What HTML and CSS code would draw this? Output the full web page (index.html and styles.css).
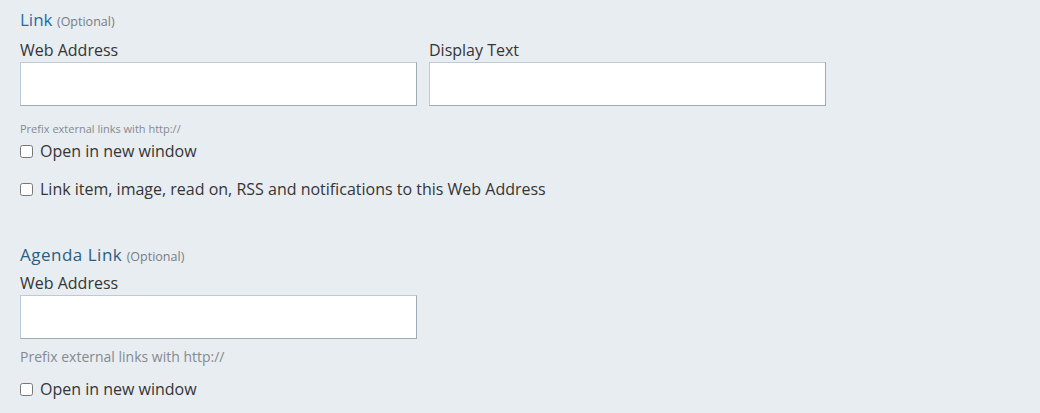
FILE: index.html
```html
<!DOCTYPE html>
<html>
<head>
<meta charset="utf-8">
<link rel="stylesheet" href="styles.css">
</head>
<body>
<div class="page">
  <section class="group">
    <h3 class="title title-link">Link <span class="optional">(Optional)</span></h3>
    <div class="row">
      <div class="field">
        <label class="label">Web Address</label>
        <input class="input" type="text">
      </div>
      <div class="field">
        <label class="label">Display Text</label>
        <input class="input" type="text">
      </div>
    </div>
    <p class="help help-small">Prefix external links with http://</p>
    <label class="check"><input type="checkbox"><span>Open in new window</span></label>
    <label class="check check-second"><input type="checkbox"><span>Link item, image, read on, RSS and notifications to this Web Address</span></label>
  </section>
  <section class="group group-agenda">
    <h3 class="title title-agenda"><span class="title-text">Agenda Link</span> <span class="optional">(Optional)</span></h3>
    <div class="row">
      <div class="field">
        <label class="label">Web Address</label>
        <input class="input" type="text">
      </div>
    </div>
    <p class="help help-large">Prefix external links with http://</p>
    <label class="check check-agenda"><input type="checkbox"><span>Open in new window</span></label>
  </section>
</div>
</body>
</html>
```
FILE: styles.css
```css
html, body {
  margin: 0;
  padding: 0;
  background: #e8edf1;
}
body {
  font-family: "Open Sans", Lato, sans-serif;
  color: #353535;
}
.page {
  padding: 10px 20px 0 20px;
}
.group {
  display: flex;
  flex-direction: column;
  align-items: flex-start;
}
.group-agenda {
  margin-top: 46px;
}
.title {
  margin: 0;
  font-size: 17px;
  font-weight: normal;
  line-height: 20px;
  height: 20px;
}
.title-link { color: #1d6ea8; }
.title-agenda { color: #2d5d80; }
.title-agenda .title-text { letter-spacing: 0.5px; }
.optional {
  font-size: 12.5px;
  line-height: 12px;
  color: #777d84;
}
.row {
  display: flex;
  gap: 12px;
  margin-top: 10px;
}
.group-agenda .row { margin-top: 8px; }
.field {
  display: flex;
  flex-direction: column;
}
.label {
  font-size: 16px;
  line-height: 20px;
  color: #353535;
  margin-bottom: 2px;
}
.input {
  box-sizing: border-box;
  width: 397px;
  height: 44px;
  margin: 0;
  background: #fff;
  border: 1px solid;
  border-color: #bccad8 #a0aab3 #a0aab3 #bccad8;
  border-radius: 0;
  outline: none;
}
.help {
  margin: 0;
  color: #858a90;
}
.help-small {
  font-size: 11px;
  line-height: 16px;
  margin-top: 15px;
}
.help-large {
  font-size: 14px;
  line-height: 18px;
  margin-top: 9px;
}
.check {
  display: flex;
  align-items: center;
  gap: 7px;
  font-size: 16px;
  line-height: 20px;
  color: #353535;
  margin-top: 4px;
}
.check input {
  margin: 0;
  width: 13px;
  height: 13px;
}
.check-second { margin-top: 18px; }
.check-agenda { margin-top: 13px; }
```
